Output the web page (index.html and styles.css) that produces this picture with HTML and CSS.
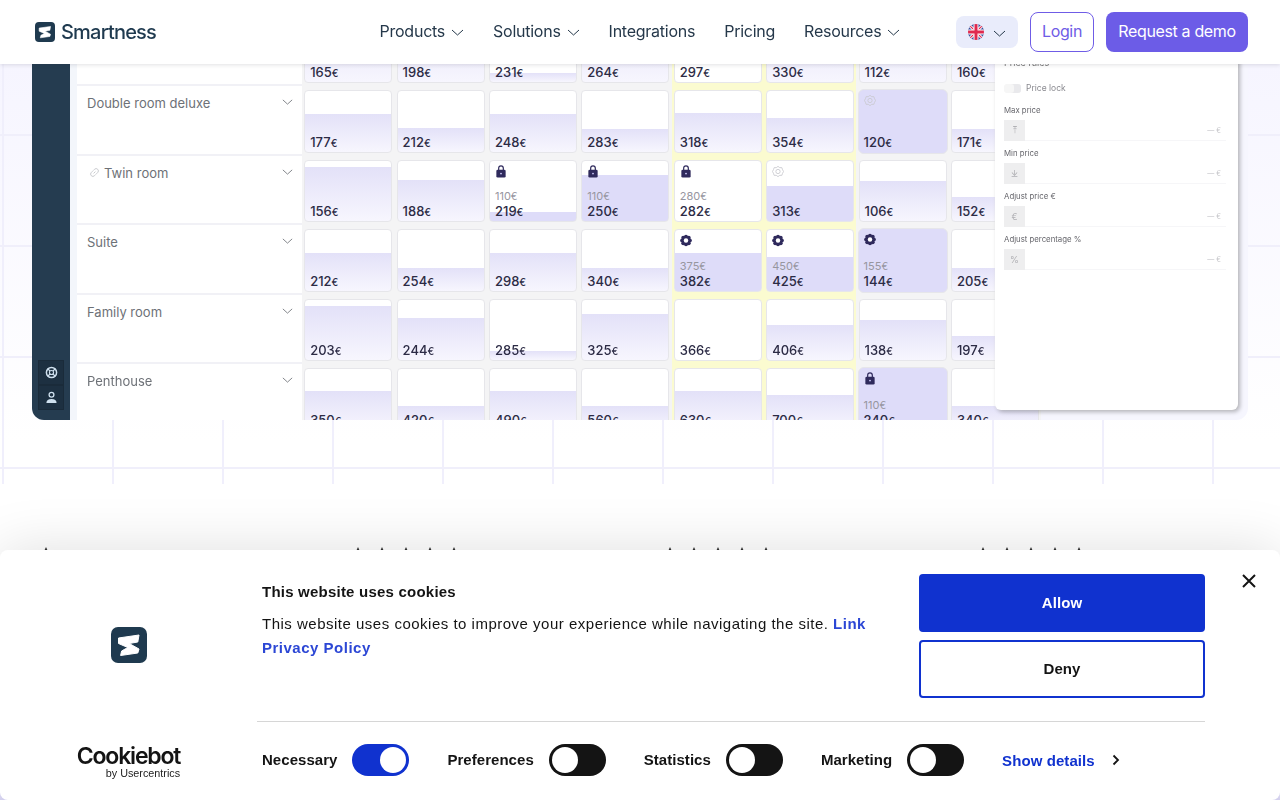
FILE: index.html
```html
<!DOCTYPE html>
<html lang="en">

<head>
    <meta charset="UTF-8">
    <meta name="viewport" content="width=device-width, initial-scale=1.0">
    <title>Smartness</title>
    <link rel="stylesheet" href="styles.css">
</head>

<body>
    <svg class="sprites" width="0" height="0">
        <symbol id="chev" viewBox="0 0 13 7"><path d="M1 1l5.500 5L12 1" fill="none" stroke="currentColor" stroke-width="1"/></symbol>
        <symbol id="logo" viewBox="0 0 36 36"><rect width="36" height="36" rx="7" fill="#1f3a4f"/><path d="M7.500 11L28 8l-1.200 7-8.600 1.500L28 22l-1.200 4-17.200 2.500 1-4.500 6.200-3.500-9.300-4z" fill="#fff" stroke="#fff" stroke-linejoin="round"/></symbol>
        <symbol id="lock" viewBox="0 0 12 14"><path d="M3.500 6V3.500a2.500 2.500 0 0 1 5 0V6" fill="none" stroke="#2f2a5c" stroke-width="1.300"/><rect x="1" y="5" width="10" height="8.500" rx="1.500" fill="#2f2a5c"/><rect x="5" y="8.500" width="2" height="1.500" fill="#b9b6e6"/></symbol>
        <symbol id="gear" viewBox="0 0 14 14"><g fill="#2f2a5c"><circle cx="7" cy="7" r="5"/><circle cx="7" cy="2.500" r="2.300"/><circle cx="7" cy="11.500" r="2.300"/><circle cx="2.500" cy="7" r="2.300"/><circle cx="11.500" cy="7" r="2.300"/><circle cx="3.800" cy="3.800" r="2.300"/><circle cx="10.200" cy="3.800" r="2.300"/><circle cx="3.800" cy="10.200" r="2.300"/><circle cx="10.200" cy="10.200" r="2.300"/></g><circle cx="7" cy="7" r="2.600" fill="#fff"/></symbol>
        <symbol id="gearline" viewBox="0 0 14 14"><g fill="none" stroke="#c9c9cf" stroke-width="1"><path d="M7 1l2 1.500 2.500 0 .8 2.400L13.500 7l-1.200 2.100-.8 2.400H9L7 13l-2-1.500-2.500 0-.8-2.400L.5 7l1.200-2.100.8-2.400H5z"/><circle cx="7" cy="7" r="2.500"/></g></symbol>
        <symbol id="star" viewBox="0 0 16 16"><path d="M8 0l2.400 5.300 5.600.6-4.200 3.800 1.200 5.700L8 12.500l-5 2.900 1.200-5.700L0 5.900l5.600-.6z" fill="#333"/></symbol>
    </svg>

    <header class="header">
        <a class="brand">
            <svg class="brandIcon"><use href="#logo"/></svg>
            <span class="brandName">Smartness</span>
        </a>
        <nav class="nav">
            <span class="navItem">Products <svg class="chev"><use href="#chev"/></svg></span>
            <span class="navItem">Solutions <svg class="chev"><use href="#chev"/></svg></span>
            <span class="navItem">Integrations</span>
            <span class="navItem">Pricing</span>
            <span class="navItem">Resources <svg class="chev"><use href="#chev"/></svg></span>
        </nav>
        <div class="actions">
            <button class="lang">
                <svg class="flag" viewBox="0 0 16 16">
                    <clipPath id="flagClip"><circle cx="8" cy="8" r="8"/></clipPath>
                    <g clip-path="url(#flagClip)">
                        <rect width="16" height="16" fill="#3b4f9c"/>
                        <path d="M0 0l16 16M16 0L0 16" stroke="#fff" stroke-width="3"/>
                        <path d="M0 0l16 16M16 0L0 16" stroke="#e0284f" stroke-width="1.200"/>
                        <path d="M8 0v16M0 8h16" stroke="#fff" stroke-width="5"/>
                        <path d="M8 0v16M0 8h16" stroke="#e0284f" stroke-width="3"/>
                    </g>
                </svg>
                <svg class="chev"><use href="#chev"/></svg>
            </button>
            <button class="login">Login</button>
            <button class="demo">Request a demo</button>
        </div>
    </header>

    <section class="hero">
        <div class="app">
            <aside class="sidebar">
                <div class="sideBtns">
                    <span class="sideBtn">
                        <svg viewBox="0 0 14 14" width="13" height="13"><circle cx="7" cy="7" r="5.500" fill="none" stroke="#cfe0ee" stroke-width="1.600"/><circle cx="7" cy="7" r="2.200" fill="none" stroke="#cfe0ee" stroke-width="1.200"/><path d="M3 3l2.500 2.500M11 3L8.500 5.500M3 11l2.500-2.500M11 11L8.500 8.500" stroke="#cfe0ee" stroke-width="1.400"/></svg>
                    </span>
                    <span class="sideBtn">
                        <svg viewBox="0 0 14 14" width="13" height="13"><circle cx="7" cy="4" r="2.600" fill="none" stroke="#cfe0ee" stroke-width="1.400"/><path d="M1.500 13c0-3 2-4.500 5.500-4.500s5.500 1.500 5.500 4.500z" fill="#cfe0ee"/></svg>
                    </span>
                </div>
            </aside>

            <div class="table">
                <div class="row rowCut">
                    <div class="name"></div>
                    <div class="slot"><div class="cell" style="--bar:60px"><span class="price">165<i>€</i></span></div></div>
                    <div class="slot"><div class="cell" style="--bar:60px"><span class="price">198<i>€</i></span></div></div>
                    <div class="slot"><div class="cell" style="--bar:9px"><span class="price">231<i>€</i></span></div></div>
                    <div class="slot"><div class="cell" style="--bar:60px"><span class="price">264<i>€</i></span></div></div>
                    <div class="slot hot"><div class="cell"><span class="price">297<i>€</i></span></div></div>
                    <div class="slot hot"><div class="cell" style="--bar:60px"><span class="price">330<i>€</i></span></div></div>
                    <div class="slot"><div class="cell" style="--bar:60px"><span class="price">112<i>€</i></span></div></div>
                    <div class="slot"><div class="cell" style="--bar:60px"><span class="price">160<i>€</i></span></div></div>
                </div>

                <div class="row">
                    <div class="name"><span>Double room deluxe</span><svg class="chev"><use href="#chev"/></svg></div>
                    <div class="slot"><div class="cell" style="--bar:38px"><span class="price">177<i>€</i></span></div></div>
                    <div class="slot"><div class="cell" style="--bar:24px"><span class="price">212<i>€</i></span></div></div>
                    <div class="slot"><div class="cell" style="--bar:38px"><span class="price">248<i>€</i></span></div></div>
                    <div class="slot"><div class="cell" style="--bar:23px"><span class="price">283<i>€</i></span></div></div>
                    <div class="slot hot"><div class="cell" style="--bar:39px"><span class="price">318<i>€</i></span></div></div>
                    <div class="slot hot"><div class="cell" style="--bar:34px"><span class="price">354<i>€</i></span></div></div>
                    <div class="slot"><div class="cell full"><svg class="mark"><use href="#gearline"/></svg><span class="price">120<i>€</i></span></div></div>
                    <div class="slot"><div class="cell" style="--bar:23px"><span class="price">171<i>€</i></span></div></div>
                </div>

                <div class="row">
                    <div class="name"><span class="linked"><svg viewBox="0 0 12 12" width="11" height="11"><path d="M5 7l2-2M4.500 4L6 2.500a2 2 0 0 1 3.500 3.500L8 7.500M7.500 8L6 9.500A2 2 0 0 1 2.500 6L4 4.500" fill="none" stroke="#c4c6ca" stroke-width="1"/></svg>Twin room</span><svg class="chev"><use href="#chev"/></svg></div>
                    <div class="slot"><div class="cell" style="--bar:54px"><span class="price">156<i>€</i></span></div></div>
                    <div class="slot"><div class="cell" style="--bar:41px"><span class="price">188<i>€</i></span></div></div>
                    <div class="slot"><div class="cell solid" style="--bar:9px"><svg class="mark"><use href="#lock"/></svg><span class="old">110<i>€</i></span><span class="price">219<i>€</i></span></div></div>
                    <div class="slot"><div class="cell solid" style="--bar:46px"><svg class="mark"><use href="#lock"/></svg><span class="old">110<i>€</i></span><span class="price">250<i>€</i></span></div></div>
                    <div class="slot hot"><div class="cell"><svg class="mark"><use href="#lock"/></svg><span class="old">280<i>€</i></span><span class="price">282<i>€</i></span></div></div>
                    <div class="slot hot"><div class="cell solid" style="--bar:35px"><svg class="mark"><use href="#gearline"/></svg><span class="price">313<i>€</i></span></div></div>
                    <div class="slot"><div class="cell" style="--bar:40px"><span class="price">106<i>€</i></span></div></div>
                    <div class="slot"><div class="cell" style="--bar:24px"><span class="price">152<i>€</i></span></div></div>
                </div>

                <div class="row">
                    <div class="name"><span>Suite</span><svg class="chev"><use href="#chev"/></svg></div>
                    <div class="slot"><div class="cell" style="--bar:38px"><span class="price">212<i>€</i></span></div></div>
                    <div class="slot"><div class="cell" style="--bar:23px"><span class="price">254<i>€</i></span></div></div>
                    <div class="slot"><div class="cell" style="--bar:38px"><span class="price">298<i>€</i></span></div></div>
                    <div class="slot"><div class="cell" style="--bar:23px"><span class="price">340<i>€</i></span></div></div>
                    <div class="slot hot"><div class="cell solid" style="--bar:38px"><svg class="mark"><use href="#gear"/></svg><span class="old">375<i>€</i></span><span class="price">382<i>€</i></span></div></div>
                    <div class="slot hot"><div class="cell solid" style="--bar:34px"><svg class="mark"><use href="#gear"/></svg><span class="old">450<i>€</i></span><span class="price">425<i>€</i></span></div></div>
                    <div class="slot"><div class="cell full"><svg class="mark"><use href="#gear"/></svg><span class="old">155<i>€</i></span><span class="price">144<i>€</i></span></div></div>
                    <div class="slot"><div class="cell" style="--bar:23px"><span class="price">205<i>€</i></span></div></div>
                </div>

                <div class="row">
                    <div class="name"><span>Family room</span><svg class="chev"><use href="#chev"/></svg></div>
                    <div class="slot"><div class="cell" style="--bar:54px"><span class="price">203<i>€</i></span></div></div>
                    <div class="slot"><div class="cell" style="--bar:42px"><span class="price">244<i>€</i></span></div></div>
                    <div class="slot"><div class="cell" style="--bar:9px"><span class="price">285<i>€</i></span></div></div>
                    <div class="slot"><div class="cell" style="--bar:46px"><span class="price">325<i>€</i></span></div></div>
                    <div class="slot hot"><div class="cell"><span class="price">366<i>€</i></span></div></div>
                    <div class="slot hot"><div class="cell" style="--bar:35px"><span class="price">406<i>€</i></span></div></div>
                    <div class="slot"><div class="cell" style="--bar:40px"><span class="price">138<i>€</i></span></div></div>
                    <div class="slot"><div class="cell" style="--bar:24px"><span class="price">197<i>€</i></span></div></div>
                </div>

                <div class="row">
                    <div class="name"><span>Penthouse</span><svg class="chev"><use href="#chev"/></svg></div>
                    <div class="slot"><div class="cell" style="--bar:39px"><span class="price">350<i>€</i></span></div></div>
                    <div class="slot"><div class="cell" style="--bar:24px"><span class="price">420<i>€</i></span></div></div>
                    <div class="slot"><div class="cell" style="--bar:39px"><span class="price">490<i>€</i></span></div></div>
                    <div class="slot"><div class="cell" style="--bar:24px"><span class="price">560<i>€</i></span></div></div>
                    <div class="slot hot"><div class="cell" style="--bar:39px"><span class="price">630<i>€</i></span></div></div>
                    <div class="slot hot"><div class="cell" style="--bar:35px"><span class="price">700<i>€</i></span></div></div>
                    <div class="slot"><div class="cell full"><svg class="mark"><use href="#lock"/></svg><span class="old">110<i>€</i></span><span class="price">240<i>€</i></span></div></div>
                    <div class="slot"><div class="cell" style="--bar:24px"><span class="price">340<i>€</i></span></div></div>
                </div>
            </div>

            <div class="rules">
                <p class="rulesTitle">Price rules</p>
                <p class="lockRow"><span class="miniToggle"></span>Price lock</p>
                <p class="ruleLabel">Max price</p>
                <div class="ruleInput"><span class="ruleIcon">⤒</span><span class="ruleVal">— €</span></div>
                <p class="ruleLabel">Min price</p>
                <div class="ruleInput"><span class="ruleIcon">⤓</span><span class="ruleVal">— €</span></div>
                <p class="ruleLabel">Adjust price €</p>
                <div class="ruleInput"><span class="ruleIcon">€</span><span class="ruleVal">— €</span></div>
                <p class="ruleLabel">Adjust percentage %</p>
                <div class="ruleInput"><span class="ruleIcon">%</span><span class="ruleVal">— €</span></div>
            </div>
        </div>
    </section>

    <section class="reviews">
        <div class="reviewCol"><svg class="star"><use href="#star"/></svg></div>
        <div class="reviewCol stars"><svg class="star"><use href="#star"/></svg><svg class="star"><use href="#star"/></svg><svg class="star"><use href="#star"/></svg><svg class="star"><use href="#star"/></svg><svg class="star"><use href="#star"/></svg></div>
        <div class="reviewCol stars"><svg class="star"><use href="#star"/></svg><svg class="star"><use href="#star"/></svg><svg class="star"><use href="#star"/></svg><svg class="star"><use href="#star"/></svg><svg class="star"><use href="#star"/></svg></div>
        <div class="reviewCol stars"><svg class="star"><use href="#star"/></svg><svg class="star"><use href="#star"/></svg><svg class="star"><use href="#star"/></svg><svg class="star"><use href="#star"/></svg><svg class="star"><use href="#star"/></svg></div>
    </section>

    <div class="cookie">
        <div class="cookieBrand">
            <svg class="cookieLogo"><use href="#logo"/></svg>
            <div class="cookiebot">
                <span class="cbName">Cookiebot</span>
                <span class="cbBy">by Usercentrics</span>
            </div>
        </div>
        <div class="cookieMain">
            <div class="cookieTop">
                <div class="cookieText">
                    <p class="cookieTitle">This website uses cookies</p>
                    <p class="cookieBody">This website uses cookies to improve your experience while navigating the site. <a class="cookieLink">Link</a> <a class="cookieLink">Privacy Policy</a></p>
                </div>
                <div class="cookieBtns">
                    <button class="allow">Allow</button>
                    <button class="deny">Deny</button>
                </div>
            </div>
            <div class="cookieBottom">
                <span class="switchLabel">Necessary</span><span class="switch on"></span>
                <span class="switchLabel">Preferences</span><span class="switch"></span>
                <span class="switchLabel">Statistics</span><span class="switch"></span>
                <span class="switchLabel">Marketing</span><span class="switch"></span>
                <a class="details">Show details</a>
                <svg class="detailsArrow" viewBox="0 0 8 12" width="8" height="12"><path d="M1.500 1.500L6 6l-4.500 4.500" fill="none" stroke="#141414" stroke-width="1.800"/></svg>
            </div>
        </div>
        <svg class="cookieClose" viewBox="0 0 14 14" width="14" height="14"><path d="M1 1l12 12M13 1L1 13" stroke="#141414" stroke-width="2"/></svg>
    </div>
</body>

</html>
```

FILE: styles.css
```css
* {
    box-sizing: border-box;
}

body {
    margin: 0;
    height: 800px;
    overflow: hidden;
    background: #fff;
    font-family: Inter, "Noto Sans", sans-serif;
    color: #25384a;
}

p {
    margin: 0;
}

button {
    font-family: inherit;
    cursor: pointer;
}

.sprites {
    display: block;
    height: 0;
}

/* header */
.header {
    position: relative;
    z-index: 2;
    height: 64px;
    padding: 0 32px 0 35px;
    display: flex;
    align-items: center;
    background: #fff;
    box-shadow: 0 1px 4px rgba(40, 40, 60, .14);
}

.brand {
    flex: 0 0 121px;
    display: flex;
    align-items: center;
    gap: 6px;
}

.brandIcon {
    flex: none;
    width: 20px;
    height: 20px;
}

.brandName {
    font-size: 20px;
    font-weight: 500;
    letter-spacing: -.8px;
    color: #1f3a4f;
}

.nav {
    margin: -2px 0 0 223.500px;
    display: flex;
    gap: 29px;
    font-size: 16px;
    letter-spacing: -.25px;
}

.navItem {
    display: flex;
    align-items: center;
    gap: 6px;
    white-space: nowrap;
}

.chev {
    width: 13px;
    height: 7px;
    margin-top: 2px;
}

.actions {
    margin-left: auto;
    display: flex;
    align-items: center;
    gap: 12px;
}

.lang {
    width: 62px;
    height: 32px;
    border: 0;
    border-radius: 8px;
    background: #e9ecfb;
    display: flex;
    align-items: center;
    justify-content: center;
    gap: 9px;
    color: #25384a;
}

.flag {
    width: 16px;
    height: 16px;
}

.login,
.demo {
    height: 40px;
    padding: 0 0 2px;
    border-radius: 8px;
    font-size: 16px;
    letter-spacing: -.35px;
}

.login {
    width: 64px;
    background: #fff;
    border: 1px solid #6f5ce6;
    color: #6f5ce6;
}

.demo {
    width: 142px;
    background: #6c5ce7;
    border: 0;
    color: #fff;
}

/* hero with the grid */
.hero {
    height: 420px;
    padding: 0 32px 64px;
    background-color: #fff;
    background-image:
        linear-gradient(#f0effb 2px, transparent 2px),
        linear-gradient(90deg, #f0effc 2px, transparent 2px),
        linear-gradient(180deg, #f6f5ff 0, #fff 90%);
    background-size: 100% 111px, 110px 100%, 100% 100%;
    background-position: 0 70px, 2px 0, 0 0;
}

.app {
    position: relative;
    height: 356px;
    display: flex;
    overflow: hidden;
    border-radius: 0 0 12px 12px;
    background: #f6f6fe;
    filter: blur(.35px);
}

.sidebar {
    flex: 0 0 38px;
    padding: 0 6px 10px;
    display: flex;
    flex-direction: column;
    justify-content: flex-end;
    background: #253c50;
}

.sideBtns {
    display: flex;
    flex-direction: column;
    border-radius: 4px;
    background: #1d3041;
}

.sideBtn {
    height: 25px;
    display: flex;
    align-items: center;
    justify-content: center;
    border: 1px solid #1a2b3a;
}

/* price table */
.table {
    flex: 0 0 971px;
    padding-left: 7px;
    background: #f3f6fb;
}

.row {
    height: 69.500px;
    display: flex;
}

.rowCut {
    height: 22px;
}

.rowCut .name {
    height: 22px;
}

.rowCut .slot {
    height: 22px;
    overflow: hidden;
    display: flex;
    flex-direction: column;
    justify-content: flex-end;
}

.name {
    flex: 0 0 225px;
    padding: 9px 9px 0 10px;
    display: flex;
    justify-content: space-between;
    background: #fff;
    border-bottom: 2px solid #f1f1f6;
    font-size: 13px;
    line-height: 16px;
    color: #6d7177;
}

.name .chev {
    margin-top: 4px;
    width: 11px;
    height: 6px;
}

.linked {
    display: flex;
    align-items: center;
    gap: 4px;
    padding-left: 2px;
    height: 16px;
}

.slot {
    flex: 0 0 92.400px;
    height: 69.500px;
    padding: 4px 2.200px 3px;
    background: #f4f4f5;
}

.slot.hot {
    background: #fbfbd0;
}

.cell {
    width: 100%;
    height: 100%;
    padding: 0 0 1px 5px;
    display: flex;
    flex-direction: column;
    justify-content: flex-end;
    border: 1px solid #e6e6ea;
    border-radius: 4px;
    background: linear-gradient(#e3e1f8, #f7f6fe) bottom / 100% var(--bar, 0) no-repeat, #fff;
    font-size: 13px;
    font-weight: 500;
    color: #2c2b45;
}

.rowCut .cell {
    height: 62px;
    flex: none;
}

.cell.solid {
    background: linear-gradient(#dedcf9, #dedcf9) bottom / 100% var(--bar, 0) no-repeat, #fff;
}

.cell.full {
    margin: -1px;
    width: calc(100% + 2px);
    height: calc(100% + 2px);
    padding-bottom: 2px;
    border-radius: 6px;
    background: #dedcf9;
}

.mark {
    width: 12px;
    height: 13px;
    margin: 4px 0 auto 0;
}

.price {
    line-height: 16px;
}

.price i,
.old i {
    font-style: normal;
    font-size: 10px;
}

.old {
    font-size: 11px;
    font-weight: 400;
    line-height: 13px;
    color: #97969f;
}

/* panel lying over the table */
.rules {
    position: absolute;
    top: -12px;
    left: 963px;
    width: 243px;
    height: 358px;
    padding: 0 9px;
    background: #fff;
    border-radius: 0 0 6px 6px;
    box-shadow: 2px 2px 4px rgba(0, 0, 0, .28), 0 0 2px rgba(255, 255, 255, .8);
    color: #77777c;
}

.rulesTitle {
    height: 14px;
    margin-top: 4px;
    font-size: 9px;
    line-height: 14px;
    color: #777;
}

.lockRow {
    margin-top: 12px;
    height: 12px;
    display: flex;
    align-items: center;
    gap: 5px;
    font-size: 8.500px;
    color: #8a8a90;
}

.miniToggle {
    width: 17px;
    height: 9px;
    border-radius: 3px;
    background: #f6f6f6;
    box-shadow: inset -7px 0 0 #e9e9ec;
}

.ruleLabel {
    height: 12px;
    font-size: 7.800px;
    line-height: 12px;
    color: #66666c;
}

.lockRow + .ruleLabel {
    margin-top: 10px;
}

.ruleInput {
    width: 222px;
    height: 21px;
    margin-top: 4px;
    display: flex;
    align-items: center;
    justify-content: space-between;
    padding-right: 5px;
    border-bottom: 1px solid #f6f6f8;
}

.ruleInput + .ruleLabel {
    margin-top: 6px;
}

.ruleIcon {
    width: 21px;
    height: 21px;
    display: flex;
    align-items: center;
    justify-content: center;
    background: #eeeeef;
    font-size: 9px;
    color: #b0b0b4;
}

.ruleVal {
    font-size: 7px;
    color: #c4c4c8;
}

/* what peeks out above the banner */
.reviews {
    height: 316px;
    padding: 63px 0 0 33px;
    display: grid;
    grid-template-columns: 312.500px 312.500px 312.500px 312.500px;
    background: linear-gradient(#fff 92%, #d9d6f6);
}

.reviewCol {
    padding-left: 5px;
    display: flex;
    gap: 8px;
}

.reviewCol.stars {
    padding-left: 4px;
}

.star {
    width: 16px;
    height: 16px;
}

/* cookie banner */
.cookie {
    position: fixed;
    z-index: 3;
    left: 0;
    right: 0;
    bottom: 0;
    height: 250px;
    display: flex;
    background: #fff;
    border-radius: 8px;
    box-shadow: 0 0 56px rgba(0, 0, 0, .13);
    font-family: "Liberation Sans", Arial, sans-serif;
    color: #141414;
}

.cookieBrand {
    flex: 0 0 257px;
    padding-top: 77px;
    display: flex;
    flex-direction: column;
    align-items: center;
}

.cookieLogo {
    width: 36px;
    height: 36px;
}

.cookiebot {
    margin-top: 81px;
    display: flex;
    flex-direction: column;
    align-items: flex-end;
}

.cbName {
    font-family: Inter, sans-serif;
    font-size: 23px;
    font-weight: 600;
    line-height: 24px;
    letter-spacing: -1.200px;
}

.cbBy {
    font-size: 10.800px;
    line-height: 11px;
    color: #222;
}

.cookieMain {
    flex: 0 0 948px;
    padding-top: 24px;
}

.cookieTop {
    height: 148px;
    display: flex;
    justify-content: space-between;
    border-bottom: 1px solid #d6d6d6;
}

.cookieText {
    width: 620px;
    padding: 9px 0 0 5px;
    font-size: 15px;
    line-height: 24px;
    letter-spacing: .5px;
}

.cookieTitle {
    font-weight: 700;
    line-height: 18px;
    margin-bottom: 11px;
    letter-spacing: .22px;
}

.cookieLink {
    color: #2c47d5;
    font-weight: 700;
}

.cookieBtns {
    width: 286px;
    display: flex;
    flex-direction: column;
    gap: 8px;
}

.allow,
.deny {
    height: 58px;
    padding: 0 0 2px;
    border-radius: 4px;
    font-family: "Liberation Sans", Arial, sans-serif;
    font-size: 15px;
    font-weight: 700;
    letter-spacing: .1px;
}

.allow {
    border: 2px solid #1032cf;
    background: #1032cf;
    color: #fff;
}

.deny {
    border: 2px solid #1032cf;
    background: #fff;
    color: #141414;
}

.cookieBottom {
    padding: 22px 0 0 5px;
    display: flex;
    align-items: center;
}

.switchLabel {
    margin: -2px 15px 0 0;
    font-size: 15px;
    font-weight: 700;
    letter-spacing: .04px;
}

.switch {
    width: 57px;
    height: 32px;
    margin-right: 38px;
    padding: 3px;
    display: flex;
    border-radius: 16px;
    background: #141414;
}

.switch::before {
    content: "";
    width: 26px;
    height: 26px;
    border-radius: 50%;
    background: #fff;
}

.switch.on {
    justify-content: flex-end;
    background: #1032cf;
}

.details {
    font-size: 15px;
    font-weight: 700;
    letter-spacing: .08px;
    color: #1032cf;
}

.detailsArrow {
    margin: 0 0 0 17px;
}

.cookieClose {
    position: absolute;
    top: 24px;
    right: 24px;
}
```
